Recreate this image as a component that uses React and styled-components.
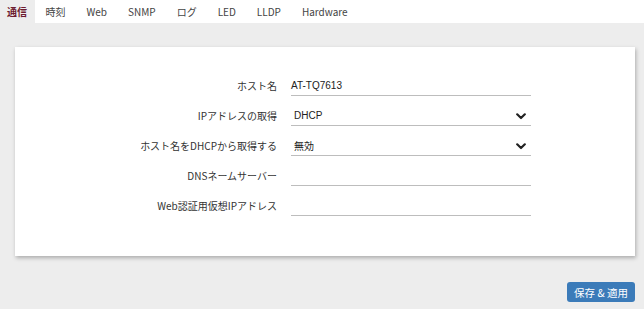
import styled, { createGlobalStyle } from 'styled-components';

const GlobalStyle = createGlobalStyle`
    body {
        margin: 0;
        background: #ededed;
        font-family: "Noto Sans CJK JP", "Noto Sans", sans-serif;
        color: #333;
    }
`;

const TabBar = styled.nav`
    display: flex;
    height: 23px;
    background: #fff;
`;

const Tab = styled.div`
    display: flex;
    align-items: center;
    padding: ${p => (p.$active ? '0 8px 0 7px' : '0 10.5px')};
    background: ${p => (p.$active ? '#ededed' : '#fff')};
    color: ${p => (p.$active ? '#6d1c30' : '#444')};
    font-weight: ${p => (p.$active ? 700 : 400)};
    font-size: 10px;
`;

const Card = styled.section`
    margin: 24px 9px 0 15px;
    padding: 29px 0 40px;
    background: #fff;
    box-shadow: 1px 2px 4px rgba(0, 0, 0, 0.28);
    display: flex;
    flex-direction: column;
    gap: 10px;
`;

const Row = styled.div`
    display: grid;
    grid-template-columns: 262px 240px;
    column-gap: 14px;
    align-items: center;
`;

const Label = styled.label`
    text-align: right;
    font-size: 10px;
    line-height: 14px;
    color: #333;
`;

const Field = styled.div`
    position: relative;
    height: 19px;
    border-bottom: 1px solid #bdbdbd;
    display: flex;
    align-items: center;
    padding-left: ${p => (p.$select ? '3px' : '0')};
    font-family: ${p => (p.$jp ? '"Noto Sans CJK JP", sans-serif' : '"Liberation Sans", Arial, sans-serif')};
    font-size: 10px;
    color: #222;
`;

const Chevron = styled.svg`
    position: absolute;
    right: 5px;
    top: 7px;
`;

const Footer = styled.div`
    display: flex;
    justify-content: flex-end;
    margin: 26px 9px 0 0;
`;

const Button = styled.button`
    width: 68px;
    height: 20px;
    border: none;
    border-radius: 3px;
    background: #3b7bb9;
    color: #fff;
    font-family: "Noto Sans CJK JP", sans-serif;
    font-size: 10.5px;
    padding: 0;
`;

const tabs = ['通信', '時刻', 'Web', 'SNMP', 'ログ', 'LED', 'LLDP', 'Hardware'];

const rows = [
    { label: 'ホスト名', value: 'AT-TQ7613' },
    { label: 'IPアドレスの取得', value: 'DHCP', select: true },
    { label: 'ホスト名をDHCPから取得する', value: '無効', select: true, jp: true },
    { label: 'DNSネームサーバー', value: '' },
    { label: 'Web認証用仮想IPアドレス', value: '' },
];

function Arrow() {
    return (
        <Chevron width="10" height="7" viewBox="0 0 10 7">
            <path d="M1.2 1.3 L5 5 L8.8 1.3" fill="none" stroke="#222" strokeWidth="2.2" strokeLinecap="round" strokeLinejoin="round" />
        </Chevron>
    );
}

export default function App() {
    return (
        <>
            <GlobalStyle />
            <TabBar>
                {tabs.map((t, i) => (
                    <Tab key={t} $active={i === 0}>{t}</Tab>
                ))}
            </TabBar>
            <Card>
                {rows.map(r => (
                    <Row key={r.label}>
                        <Label>{r.label}</Label>
                        <Field $select={r.select} $jp={r.jp}>
                            {r.value}
                            {r.select && <Arrow />}
                        </Field>
                    </Row>
                ))}
            </Card>
            <Footer>
                <Button>保存 &amp; 適用</Button>
            </Footer>
        </>
    );
}
